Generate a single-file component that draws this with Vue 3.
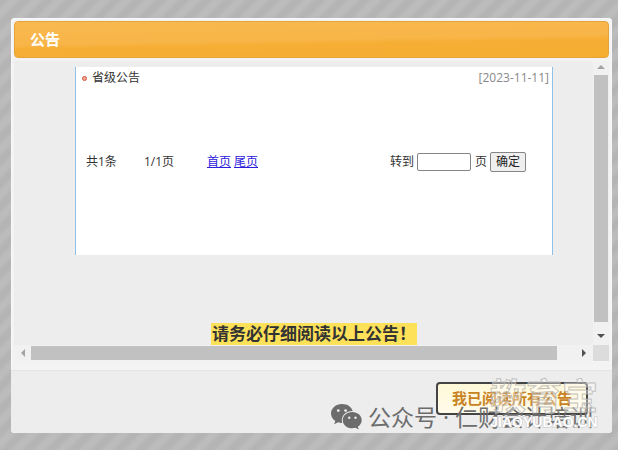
<script setup>
import { ref } from 'vue';

const notices = ref([
    { id: 1, title: '省级公告', date: '2023-11-11' },
]);
const page = ref('');
</script>

<template>
    <div class="page">
        <section class="dialog">
            <h1 class="title">公告</h1>

            <div class="viewport">
                <div class="content">
                    <div class="panel">
                        <ul class="notices">
                            <li v-for="item in notices" :key="item.id">
                                <span class="dot"></span>
                                <span>{{ item.title }}</span>
                                <time class="date">[{{ item.date }}]</time>
                            </li>
                        </ul>
                        <form class="pager" @submit.prevent>
                            <span class="total">共{{ notices.length }}条</span>
                            <span class="current">1/1页</span>
                            <a href="#">首页</a>
                            <a href="#">尾页</a>
                            <label class="jump" for="page">转到</label>
                            <input id="page" v-model="page" type="text" />
                            <label class="unit" for="page">页</label>
                            <button type="submit">确定</button>
                        </form>
                    </div>
                    <p class="remind"><mark>请务必仔细阅读以上公告！</mark></p>
                </div>
                <div class="bar vertical">
                    <svg width="8" height="4" viewBox="0 0 8 4"><path d="M0 4L4 0L8 4Z" fill="#a3a3a3" /></svg>
                    <div class="thumb"></div>
                    <svg width="8" height="4" viewBox="0 0 8 4"><path d="M0 0H8L4 4Z" fill="#505050" /></svg>
                </div>
                <div class="bar horizontal">
                    <svg width="4" height="8" viewBox="0 0 4 8"><path d="M4 0V8L0 4Z" fill="#a3a3a3" /></svg>
                    <div class="thumb"></div>
                    <svg width="4" height="8" viewBox="0 0 4 8"><path d="M0 0L4 4L0 8Z" fill="#505050" /></svg>
                </div>
                <div class="corner"></div>
            </div>

            <footer class="footer">
                <button class="confirm" type="button">我已阅读所有公告</button>
            </footer>

            <!-- 水印 -->
            <div class="account">
                <svg width="31" height="26" viewBox="0 0 31 26">
                    <path
                        d="M11 0C5 0 0 4.200 0 9.500C0 12.600 1.700 15.200 4.300 17L3.200 20.300L7.100 18.300C8.500 18.700 9.600 19 11.200 18.900C9.400 12.500 14.500 6.800 21.700 7C20.500 2.800 16.500 0 11 0Z"
                        fill="#6c6c6c" />
                    <path
                        d="M21.200 8.100C15.700 8.100 11.800 11.800 11.800 16.200C11.800 20.800 15.900 24.300 21.200 24.300C22.400 24.300 23.500 24.100 24.500 23.800L27.700 25.500L26.900 22.600C29.300 21.100 30.700 18.800 30.700 16.200C30.700 11.700 26.500 8.100 21.200 8.100Z"
                        fill="#6c6c6c" />
                    <circle cx="7.300" cy="6.600" r="1.400" fill="#eee" />
                    <circle cx="14.600" cy="6.600" r="1.400" fill="#eee" />
                    <circle cx="18.200" cy="13.700" r="1.200" fill="#eee" />
                    <circle cx="24.500" cy="13.700" r="1.200" fill="#eee" />
                </svg>
                <span>公众号</span>
                <span>·</span>
                <span>仁财会计培训</span>
            </div>
            <div class="brand">
                <span class="brand-name">教育宝</span>
                <span class="brand-url">JIAOYUBAO.CN</span>
            </div>
        </section>
    </div>
</template>

<style>
body {
    margin: 0;
    background: #fff;
}
</style>

<style scoped>
.page {
    box-sizing: border-box;
    min-height: 100vh;
    margin-right: 1px;
    padding: 18px 6px 16px 11px;
    background: repeating-linear-gradient(135deg, #b4b4b4 0 4px, #bcbcbc 8px 12px, #b4b4b4 16px);
    color: #333;
    font: 12px/18px "Open Sans", "Noto Sans CJK SC", sans-serif;
}

.dialog {
    position: relative;
    padding: 3px;
    border-radius: 4px;
    background: #f3f3f3;
    box-shadow: inset 0 0 0 1px #f8f9fb;
}

.title {
    box-sizing: border-box;
    margin: 0;
    padding: 0 15px;
    border: 1px solid #e5a33c;
    border-radius: 4px;
    background: linear-gradient(179deg, #f9b94f 0, #f8b548 50%, #f6ae35 60%, #f6ad2f 100%);
    color: #fff;
    font-size: 15px;
    font-weight: 700;
    line-height: 35px;
}

.viewport {
    display: grid;
    grid-template-columns: 1fr 16px;
    grid-template-rows: 284px 16px;
    margin-top: 3px;
    background: #ededed;
}

.content {
    padding: 6px 40px 0 61px;
}

.panel {
    box-sizing: border-box;
    height: 188px;
    border: solid #8fc1e8;
    border-width: 0 1px;
    background: #fff;
}

.notices {
    margin: 0;
    padding: 2px 3px 0 6px;
    list-style: none;
}

.notices li {
    display: flex;
    align-items: center;
}

.dot {
    box-sizing: border-box;
    width: 5px;
    height: 5px;
    margin-right: 5px;
    border: 1px solid #d9513c;
    border-radius: 50%;
    background: #f0a898;
}

.date {
    margin-left: auto;
    color: #888;
}

.pager {
    display: flex;
    align-items: center;
    padding: 65px 26px 0 10px;
}

.current {
    margin: 0 33px 0 27px;
}

.pager a {
    margin-right: 3px;
    color: #2a20dc;
}

.jump {
    margin-left: auto;
}

.pager input {
    box-sizing: border-box;
    width: 54px;
    height: 18px;
    margin: 0 4px 0 3px;
    padding: 1px 2px;
    border: 1px solid #858585;
    border-radius: 2px;
    background: #fff;
    font: inherit;
}

.pager button {
    box-sizing: border-box;
    height: 20px;
    margin-left: 3px;
    padding: 0 5px;
    border: 1px solid #858585;
    border-radius: 2px;
    background: #efefef;
    color: #222;
    font: inherit;
    line-height: 18px;
}

.remind {
    margin: 68px 0 0;
    text-align: center;
    font-size: 17px;
    font-weight: 700;
    line-height: 22px;
}

.remind mark {
    display: inline-block;
    padding: 0 1px;
    background: #fde158;
    color: #333;
    white-space: nowrap;
}

.bar {
    display: flex;
    align-items: center;
    background: #f1f1f1;
}

.vertical {
    flex-direction: column;
    gap: 6px;
    padding: 4px 0 7px;
}

.horizontal {
    gap: 6px;
    padding: 0 7px;
}

.thumb {
    flex: 1;
    background: #c1c1c1;
}

.vertical .thumb {
    width: 14px;
    margin-bottom: 6px;
}

.horizontal .thumb {
    height: 14px;
    margin-right: 19px;
}

.corner {
    background: #dcdcdc;
}

.footer {
    display: flex;
    justify-content: flex-end;
    margin: 9px -3px -3px;
    padding: 11px 24px 18px;
    border-top: 1px solid #e4e4e4;
    border-radius: 0 0 4px 4px;
    background: #ededed;
}

.confirm {
    padding: 2px 14px;
    border: 2px solid #444;
    border-radius: 4px;
    background: linear-gradient(#fff8d8, #fffbea);
    color: #c98222;
    font: 700 15px/25px "Open Sans", "Noto Sans CJK SC", sans-serif;
}

.account {
    position: absolute;
    right: 19px;
    bottom: 2px;
    display: flex;
    align-items: center;
    gap: 6px;
    color: #6c6c6c;
    font-size: 23px;
    line-height: 28px;
    white-space: nowrap;
    pointer-events: none;
}

.brand {
    position: absolute;
    right: 14px;
    bottom: 4px;
    display: flex;
    flex-direction: column;
    align-items: center;
    color: rgba(255, 255, 255, 0.4);
    font-weight: 700;
    white-space: nowrap;
    pointer-events: none;
    -webkit-text-stroke: 1px rgba(180, 180, 180, 0.8);
}

.brand-name {
    font-size: 36px;
    line-height: 36px;
}

.brand-url {
    color: #fff;
    font: 700 14px/14px "Liberation Sans", sans-serif;
    paint-order: stroke fill;
}
</style>
